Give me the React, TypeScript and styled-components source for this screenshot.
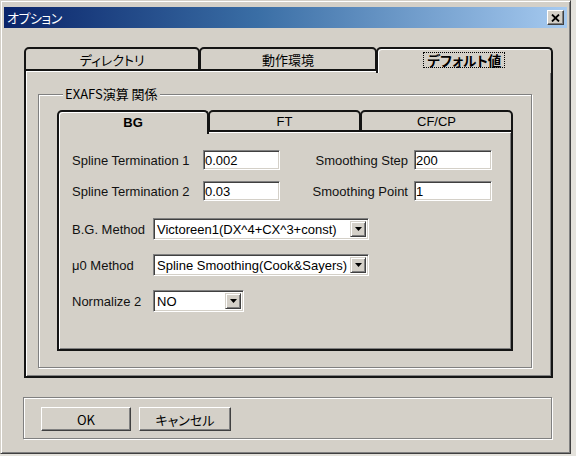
import React from 'react';
import styled, { createGlobalStyle } from 'styled-components';

const JP = `"Noto Sans CJK JP", "Liberation Sans", sans-serif`;
const LAT = `"Liberation Sans", "Noto Sans CJK JP", sans-serif`;

const GlobalStyle = createGlobalStyle`
  html, body { margin: 0; padding: 0; background: #e4e2dc; }
  body { font-family: ${LAT}; font-size: 13px; color: #000; }
  * { box-sizing: border-box; }
`;

const Window = styled.div`
  width: 571px;
  height: 454px;
  background: #d4d0c8;
  border: 1px solid;
  border-color: #d4d0c8 #404040 #404040 #d4d0c8;
  box-shadow: inset 1px 1px 0 #fff, inset -1px -1px 0 #808080;
  padding: 6px 3px 3px 3px;
  display: flex;
  flex-direction: column;
`;

const TitleBar = styled.div`
  height: 21px;
  flex: none;
  background: linear-gradient(to right, #0a246a 0%, #3a6ea5 45%, #a6caf0 100%);
  display: flex;
  align-items: center;
  justify-content: space-between;
  padding: 0 3px 0 3px;
`;

const TitleText = styled.span`
  font-family: ${JP};
  font-feature-settings: "palt";
  font-size: 13px;
  color: #fff;
  letter-spacing: -0.5px;
`;

const CloseButton = styled.div`
  width: 17px;
  height: 15px;
  background: #d4d0c8;
  border: 1px solid;
  border-color: #fff #404040 #404040 #fff;
  box-shadow: inset -1px -1px 0 #808080;
  display: flex;
  align-items: center;
  justify-content: center;
`;

const Body = styled.div`
  flex: 1;
  display: flex;
  flex-direction: column;
  padding: 19px 14px 0 20px;
`;

const TabControl = styled.div`
  display: flex;
  flex-direction: column;
`;

const TabRow = styled.div<{ $h: number }>`
  display: grid;
  grid-template-columns: repeat(3, 1fr);
  height: ${p => p.$h}px;
  align-items: start;
`;

const Tab = styled.div<{ $active?: boolean; $h: number; $jp?: boolean; $bold?: boolean }>`
  position: relative;
  z-index: ${p => (p.$active ? 1 : 0)};
  height: ${p => (p.$active ? p.$h + 2 : p.$h)}px;
  display: flex;
  align-items: center;
  justify-content: center;
  padding-bottom: ${p => (p.$active ? 2 : 0)}px;
  background: #d4d0c8;
  border: 2px solid #141414;
  border-bottom: ${p => (p.$active ? 'none' : '2px solid #141414')};
  border-radius: 5px 5px 0 0;
  box-shadow: ${p => (p.$active ? 'inset 1px 1px 0 #fff' : 'none')};
  & + & { margin-left: -1px; }
  font-family: ${p => (p.$jp ? JP : LAT)};
  font-feature-settings: "palt";
  font-size: 13px;
  font-weight: ${p => (p.$bold ? 700 : 400)};
`;

const FocusText = styled.span`
  border: 1px dotted #000;
  padding: 0 3px;
  line-height: 14px;
  font-size: 13.5px;
`;

const TabPanel = styled.div<{ $h: number }>`
  height: ${p => p.$h}px;
  border: 2px solid #141414;
  border-top: none;
  box-shadow: inset 1px 1px 0 #fff, inset -1px -1px 0 #808080;
`;

const OuterPanel = styled(TabPanel)`
  padding: 15px 19px 0 12px;
`;

const GroupBox = styled.fieldset`
  margin: 0;
  padding: 8px 18px 0 18px;
  height: 282px;
  border: 1px solid #808080;
  box-shadow: 1px 1px 0 #fff, inset 1px 1px 0 #fff;
`;

const GroupLegend = styled.legend`
  margin-left: 6px;
  padding: 0 2px;
  background: #d4d0c8;
  font-family: ${JP};
  font-feature-settings: "palt";
  font-size: 13px;
  line-height: 16px;
`;

const FormPanel = styled(TabPanel)`
  padding: 18px 0 0 13px;
  display: flex;
  flex-direction: column;
`;

const FormRow = styled.div<{ $mt?: number }>`
  display: flex;
  align-items: center;
  margin-top: ${p => p.$mt ?? 0}px;
`;

const Label = styled.span<{ $w: number; $right?: boolean }>`
  width: ${p => p.$w}px;
  flex: none;
  text-align: ${p => (p.$right ? 'right' : 'left')};
  padding-right: ${p => (p.$right ? 6 : 0)}px;
  font-family: ${LAT};
  font-size: 13px;
  color: #111;
`;

const TextBox = styled.input<{ $w: number }>`
  width: ${p => p.$w}px;
  height: 20px;
  flex: none;
  margin: 0;
  padding: 0 1px;
  background: #fff;
  border: 1px solid;
  border-color: #808080 #fff #fff #808080;
  box-shadow: inset 1px 1px 0 #404040, inset -1px -1px 0 #d4d0c8;
  font-family: ${LAT};
  font-size: 13px;
  color: #000;
  outline: none;
`;

const Combo = styled.div<{ $w: number }>`
  width: ${p => p.$w}px;
  height: 22px;
  flex: none;
  display: flex;
  align-items: stretch;
  background: #fff;
  border: 1px solid;
  border-color: #808080 #fff #fff #808080;
  box-shadow: inset 1px 1px 0 #404040, inset -1px -1px 0 #d4d0c8;
  padding: 2px;
`;

const ComboText = styled.span`
  flex: 1;
  display: flex;
  align-items: center;
  padding-left: 1px;
  font-family: ${LAT};
  font-size: 13px;
  white-space: nowrap;
  overflow: hidden;
`;

const ComboButton = styled.span`
  width: 16px;
  flex: none;
  background: #d4d0c8;
  border: 1px solid;
  border-color: #d4d0c8 #404040 #404040 #d4d0c8;
  box-shadow: inset 1px 1px 0 #fff, inset -1px -1px 0 #808080;
  display: flex;
  align-items: center;
  justify-content: center;
`;

const ButtonGroup = styled.div`
  margin: 19px 1px 0 -1px;
  height: 42px;
  border: 1px solid #808080;
  box-shadow: 1px 1px 0 #fff, inset 1px 1px 0 #fff;
  display: flex;
  align-items: flex-start;
  gap: 8px;
  padding: 9px 0 0 17px;
`;

const PushButton = styled.button<{ $w: number }>`
  width: ${p => p.$w}px;
  height: 24px;
  margin: 0;
  padding: 0;
  background: #d4d0c8;
  border: 1px solid;
  border-color: #fff #404040 #404040 #fff;
  box-shadow: inset -1px -1px 0 #808080;
  font-family: ${JP};
  font-feature-settings: "palt";
  font-size: 13px;
  color: #000;
`;

const Arrow = () => (
  <svg width="7" height="4" viewBox="0 0 7 4">
    <path d="M0 0H7L3.5 4Z" fill="#000" />
  </svg>
);

const CloseGlyph = () => (
  <svg width="9" height="8" viewBox="0 0 9 8">
    <path d="M1 0.5L8 7.5M8 0.5L1 7.5" stroke="#000" strokeWidth="1.8" />
  </svg>
);

const Select = ({ w, text }: { w: number; text: string }) => (
  <Combo $w={w}>
    <ComboText>{text}</ComboText>
    <ComboButton>
      <Arrow />
    </ComboButton>
  </Combo>
);

export default function App() {
  return (
    <>
      <GlobalStyle />
      <Window>
        <TitleBar>
          <TitleText>オプション</TitleText>
          <CloseButton>
            <CloseGlyph />
          </CloseButton>
        </TitleBar>
        <Body>
          <TabControl>
            <TabRow $h={24}>
              <Tab $h={24} $jp>ディレクトリ</Tab>
              <Tab $h={24} $jp>動作環境</Tab>
              <Tab $h={24} $jp $active $bold>
                <FocusText>デフォルト値</FocusText>
              </Tab>
            </TabRow>
            <OuterPanel $h={307}>
              <GroupBox>
                <GroupLegend>EXAFS演算 関係</GroupLegend>
                <TabControl>
                  <TabRow $h={22}>
                    <Tab $h={22} $active $bold>BG</Tab>
                    <Tab $h={22}>FT</Tab>
                    <Tab $h={22}>CF/CP</Tab>
                  </TabRow>
                  <FormPanel $h={219}>
                    <FormRow>
                      <Label $w={131}>Spline Termination 1</Label>
                      <TextBox $w={77} defaultValue="0.002" readOnly />
                      <Label $w={134} $right>Smoothing Step</Label>
                      <TextBox $w={78} defaultValue="200" readOnly />
                    </FormRow>
                    <FormRow $mt={11}>
                      <Label $w={131}>Spline Termination 2</Label>
                      <TextBox $w={77} defaultValue="0.03" readOnly />
                      <Label $w={134} $right>Smoothing Point</Label>
                      <TextBox $w={78} defaultValue="1" readOnly />
                    </FormRow>
                    <FormRow $mt={17}>
                      <Label $w={81}>B.G. Method</Label>
                      <Select w={216} text="Victoreen1(DX^4+CX^3+const)" />
                    </FormRow>
                    <FormRow $mt={14}>
                      <Label $w={81}>μ0 Method</Label>
                      <Select w={216} text="Spline Smoothing(Cook&Sayers)" />
                    </FormRow>
                    <FormRow $mt={14}>
                      <Label $w={81}>Normalize 2</Label>
                      <Select w={91} text="NO" />
                    </FormRow>
                  </FormPanel>
                </TabControl>
              </GroupBox>
            </OuterPanel>
          </TabControl>
          <ButtonGroup>
            <PushButton $w={90}>OK</PushButton>
            <PushButton $w={92}>キャンセル</PushButton>
          </ButtonGroup>
        </Body>
      </Window>
    </>
  );
}
